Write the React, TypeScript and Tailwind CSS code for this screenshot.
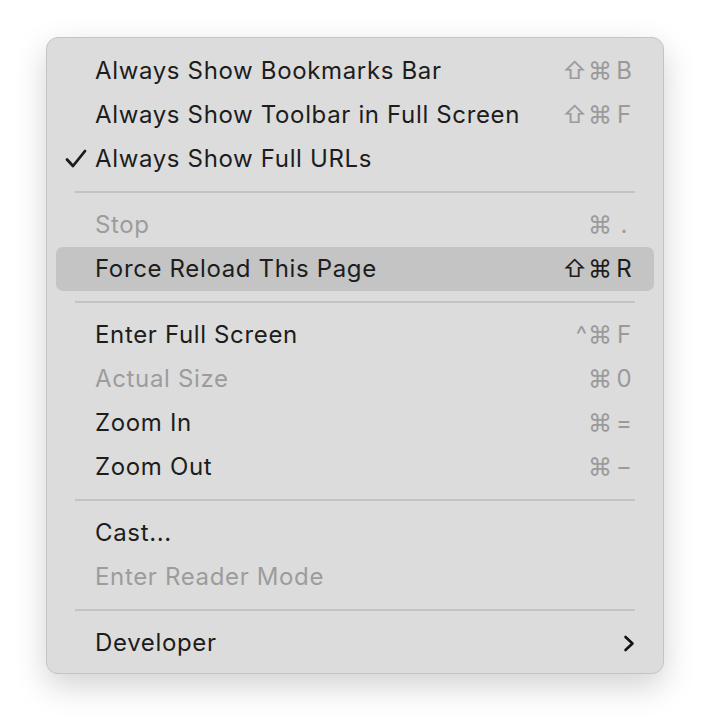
import React from 'react';

type Item =
  | { kind: 'sep' }
  | {
      kind: 'item';
      label: string;
      mods?: string;
      keyChar?: string;
      disabled?: boolean;
      checked?: boolean;
      active?: boolean;
      submenu?: boolean;
    };

const items: Item[] = [
  { kind: 'item', label: 'Always Show Bookmarks Bar', mods: '⇧⌘', keyChar: 'B', disabled: false },
  { kind: 'item', label: 'Always Show Toolbar in Full Screen', mods: '⇧⌘', keyChar: 'F' },
  { kind: 'item', label: 'Always Show Full URLs', checked: true },
  { kind: 'sep' },
  { kind: 'item', label: 'Stop', mods: '⌘', keyChar: '.', disabled: true },
  { kind: 'item', label: 'Force Reload This Page', mods: '⇧⌘', keyChar: 'R', active: true },
  { kind: 'sep' },
  { kind: 'item', label: 'Enter Full Screen', mods: '^⌘', keyChar: 'F' },
  { kind: 'item', label: 'Actual Size', mods: '⌘', keyChar: '0', disabled: true },
  { kind: 'item', label: 'Zoom In', mods: '⌘', keyChar: '=' },
  { kind: 'item', label: 'Zoom Out', mods: '⌘', keyChar: '−' },
  { kind: 'sep' },
  { kind: 'item', label: 'Cast...' },
  { kind: 'item', label: 'Enter Reader Mode', disabled: true },
  { kind: 'sep' },
  { kind: 'item', label: 'Developer', submenu: true },
];

function Check() {
  return (
    <svg width="22" height="20" viewBox="0 0 22 20" className="absolute left-[9px] top-[12px]">
      <path d="M2 10.5 L8 17 L20 2" fill="none" stroke="#1c1c1c" strokeWidth="2.8" strokeLinecap="round" strokeLinejoin="round" />
    </svg>
  );
}

function Chevron() {
  return (
    <svg width="12" height="17" viewBox="0 0 12 17">
      <path d="M2.5 2 L9.5 8.5 L2.5 15" fill="none" stroke="#111" strokeWidth="2.6" strokeLinecap="round" strokeLinejoin="round" />
    </svg>
  );
}

export default function App() {
  return (
    <div className="min-h-screen bg-white pt-[37px] pl-[46px]" style={{ fontFamily: 'Inter, "DejaVu Sans", sans-serif' }}>
      <div className="w-[618px] rounded-[12px] border border-[#c4c4c4] bg-[#dcdcdc] px-[9px] pt-[11px] pb-[8px] shadow-[0_12px_32px_rgba(0,0,0,0.18)]">
        {items.map((it, i) => {
          if (it.kind === 'sep') {
            return (
              <div key={i} className="flex h-[22px] items-center px-[19px]">
                <div className="h-[2px] w-full bg-[#c3c3c3]" />
              </div>
            );
          }
          const textColor = it.disabled ? 'text-[#9c9c9c]' : 'text-[#1d1d1d]';
          const modColor = it.active ? 'text-[#1d1d1d]' : 'text-[#9a9a9a]';
          return (
            <div
              key={i}
              className={`relative flex h-[44px] items-center rounded-[7px] pl-[39px] pr-[19px] ${it.active ? 'bg-[#c4c4c4]' : ''}`}
            >
              {it.checked && <Check />}
              <span className={`flex-1 text-[24px] tracking-[0.65px] ${textColor}`}>{it.label}</span>
              {it.keyChar && (
                <span className={`flex items-center text-[24px] ${modColor}`}>
                  <span className="tracking-[1px]">{it.mods}</span>
                  <span className="w-[22px] text-center">{it.keyChar}</span>
                </span>
              )}
              {it.submenu && <Chevron />}
            </div>
          );
        })}
      </div>
    </div>
  );
}
